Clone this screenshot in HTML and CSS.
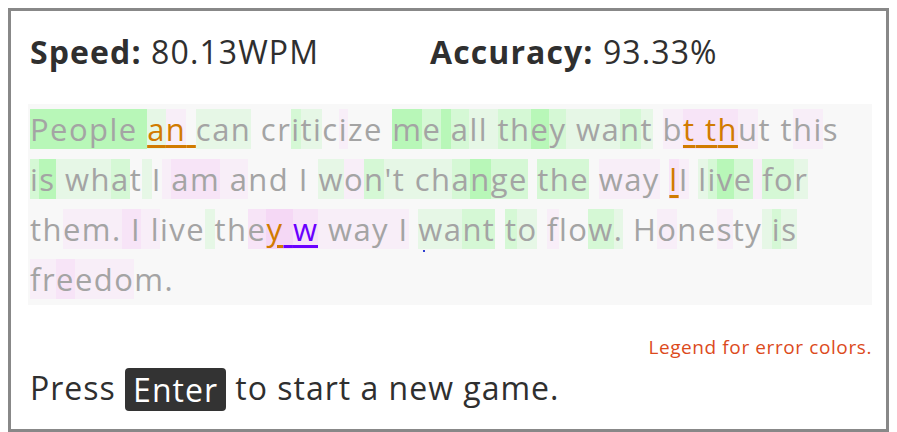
FILE: index.html
```html
<!DOCTYPE html>
<html>
<head>
<meta charset="utf-8">
<link rel="stylesheet" href="styles.css">
</head>
<body>
<div class="game">
  <div class="stats">
    <div class="stat"><b>Speed:</b> 80.13WPM</div>
    <div class="stat"><b>Accuracy:</b> 93.33%</div>
  </div>
  <div class="text"><span class="g3">P</span><span class="g3">e</span><span class="g3">o</span><span class="g3">p</span><span class="g3">l</span><span class="g3">e</span><span class="g3"> </span><span class="g1 eo">a</span><span class="p1 eo">n</span><span class="eo"> </span><span class="g1">c</span><span class="g1">a</span><span class="g1">n</span><span> </span><span>c</span><span>r</span><span class="g2">i</span><span class="g1">t</span><span class="g1">i</span><span>c</span><span class="p1">i</span><span>z</span><span>e</span><span> </span><span class="g3">m</span><span class="g2">e</span><span class="g3"> </span><span class="g2">a</span><span class="g1">l</span><span class="g1">l</span><span class="g1"> </span><span class="g2">t</span><span class="g2">h</span><span class="g3">e</span><span class="g2">y</span><span class="g1"> </span><span class="g1">w</span><span class="g1">a</span><span class="g2">n</span><span class="g1">t</span><span> </span><span class="p1">b</span><span class="p2 eo">t</span><span class="p2 eo"> </span><span class="p2 eo">t</span><span class="p2 eo">h</span><span class="p1">u</span><span>t</span><span> </span><span>t</span><span class="p1">h</span><span class="p1">i</span><span>s</span><span> </span><span class="g2">i</span><span class="g3">s</span><span class="g1"> </span><span class="g1">w</span><span class="g1">h</span><span class="g2">a</span><span>t</span><span class="g1"> </span><span>I</span><span class="p1"> </span><span class="p2">a</span><span class="p2">m</span><span class="p1"> </span><span class="p1">a</span><span>n</span><span>d</span><span> </span><span>I</span><span> </span><span class="g1">w</span><span class="p1">o</span><span class="g2">n</span><span class="g1">'</span><span class="g1">t</span><span class="g1"> </span><span class="g1">c</span><span class="g1">h</span><span class="g2">a</span><span class="g3">n</span><span class="g2">g</span><span class="g2">e</span><span> </span><span class="g2">t</span><span class="g2">h</span><span class="g2">e</span><span> </span><span class="p1">w</span><span class="p1">a</span><span class="p1">y</span><span> </span><span class="p2 eo">l</span><span class="p1">I</span><span> </span><span class="g1">l</span><span class="g2">i</span><span class="g3">v</span><span class="g2">e</span><span class="p1"> </span><span class="g2">f</span><span class="g2">o</span><span class="g1">r</span><span> </span><span>t</span><span>h</span><span class="p1">e</span><span class="p1">m</span><span class="p1">.</span><span class="p2"> </span><span class="p2">I</span><span class="p1"> </span><span class="p1">l</span><span>i</span><span>v</span><span>e</span><span class="g1"> </span><span>t</span><span>h</span><span class="p2">e</span><span class="p3 eo">y</span><span class="p3 ep"> </span><span class="p2 ep">w</span><span class="p1"> </span><span class="p1">w</span><span class="p1">a</span><span class="p1">y</span><span class="p1"> </span><span class="p1">I</span><span> </span><span class="g1 caret">w</span><span class="g1">a</span><span class="g2">n</span><span class="g2">t</span><span> </span><span class="g2">t</span><span class="g1">o</span><span> </span><span class="p1">f</span><span>l</span><span>o</span><span class="g2">w</span><span class="g1">.</span><span> </span><span>H</span><span class="p1">o</span><span>n</span><span>e</span><span class="p1">s</span><span>t</span><span>y</span><span class="g1"> </span><span class="g2">i</span><span class="g1">s</span><span> </span><span class="p1">f</span><span class="p1">r</span><span class="p2">e</span><span class="p1">e</span><span class="p1">d</span><span class="p1">o</span><span>m</span><span>.</span></div>
  <div class="legend">Legend for error colors.</div>
  <div class="restart">Press <kbd class="key">Enter</kbd> to start a new game.</div>
</div>
</body>
</html>
```
FILE: styles.css
```css
html, body {
  margin: 0;
  padding: 0;
  background: #ffffff;
}
body {
  padding: 8px;
  font-family: "Open Sans", "Noto Sans", sans-serif;
  color: #2f2f2f;
}
.game {
  box-sizing: border-box;
  width: 881px;
  height: 424px;
  border: 3px solid #888888;
  padding: 0 14px 0 17px;
  display: flex;
  flex-direction: column;
}
.stats {
  display: grid;
  grid-template-columns: 400px 1fr;
  padding: 0 0 0 2px;
  margin-top: 21px;
  height: 72px;
  font-size: 32px;
  line-height: 40px;
  letter-spacing: 1.1px;
  color: #2f2f2f;
}
.stats b {
  font-weight: 700;
}
.text {
  background: #f8f8f8;
  height: 201px;
  box-sizing: border-box;
  padding: 0 25px 0 2px;
  font-size: 31px;
  line-height: 50px;
  letter-spacing: 1.45px;
  color: #a4a4a4;
}
.g1, .g2, .g3, .p1, .p2, .p3 {
  background-repeat: no-repeat;
  background-size: 100% 40px;
  background-position: 0 1px;
}
.g1 { background-image: linear-gradient(#e6f7e6, #e6f7e6); }
.g2 { background-image: linear-gradient(#d5f8d5, #d5f8d5); }
.g3 { background-image: linear-gradient(#b8f7b8, #b8f7b8); }
.p1 { background-image: linear-gradient(#f8eef8, #f8eef8); }
.p2 { background-image: linear-gradient(#f7e4f7, #f7e4f7); }
.p3 { background-image: linear-gradient(#f5d8f5, #f5d8f5); }
.eo {
  color: #d17b00;
  text-decoration: underline;
  text-decoration-color: #d17b00;
  text-decoration-thickness: 3px;
  text-underline-offset: 4px;
}
.ep {
  color: #6a00ff;
  text-decoration: underline;
  text-decoration-color: #6a00ff;
  text-decoration-thickness: 3px;
  text-underline-offset: 4px;
}
.caret {
  position: relative;
}
.caret::after {
  content: "";
  position: absolute;
  left: 5px;
  bottom: -2px;
  width: 2px;
  height: 2px;
  background: #3040d0;
}
.legend {
  margin-top: 31px;
  text-align: right;
  font-size: 19px;
  line-height: 22px;
  letter-spacing: 0.6px;
  color: #dc4a1c;
}
.restart {
  margin-top: 8px;
  padding-left: 2px;
  font-size: 32px;
  line-height: 44px;
  letter-spacing: 1px;
  color: #2f2f2f;
}
.key {
  display: inline-block;
  font-family: inherit;
  font-size: 32px;
  line-height: 43px;
  padding: 0 8px;
  background: #333333;
  color: #ffffff;
  border-radius: 4px;
  vertical-align: -2px;
}
```
